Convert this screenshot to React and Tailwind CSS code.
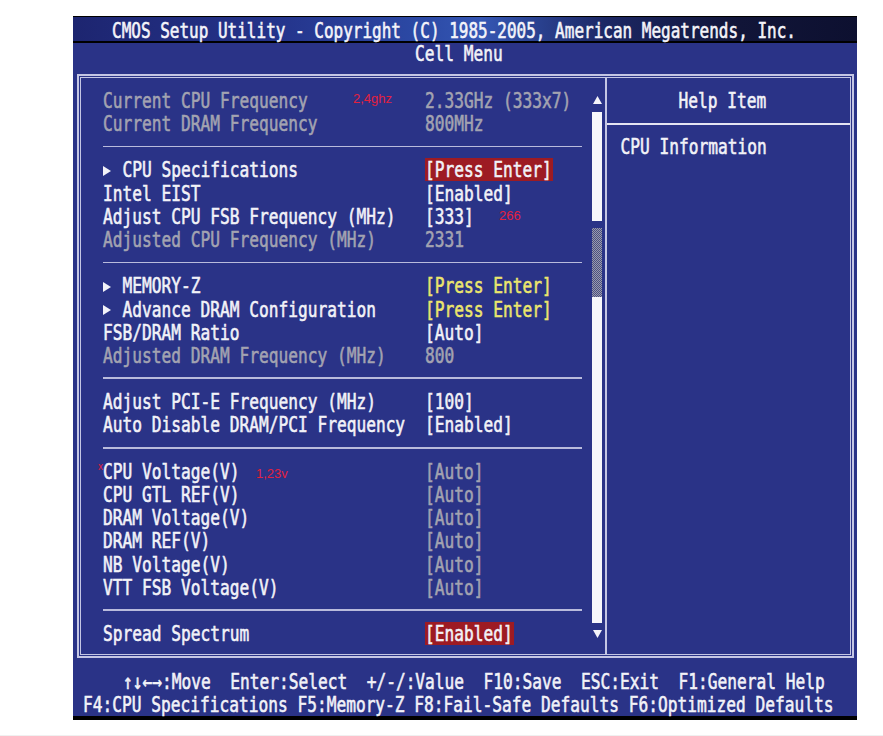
import React from 'react';

const G = 'text-[#a3a3b1]';
const W = 'text-[#f2f2f8]';
const Y = 'text-[#ece66c]';

function T({ children, className = '' }) {
  return (
    <span className={'inline-block scale-y-[1.3] translate-y-[2px] whitespace-pre [-webkit-text-stroke:0.45px_currentColor] ' + className}>
      {children}
    </span>
  );
}

function Arrow() {
  return (
    <span className="inline-flex items-center w-[19.5px] h-[23.2px] pt-[3px]">
      <svg width="8" height="10" viewBox="0 0 8 10" className="block">
        <polygon points="0,0 8,5 0,10" fill="#f2f2f8" />
      </svg>
    </span>
  );
}

const rows = [
  { l: 'Current CPU Frequency', v: '2.33GHz (333x7)', lc: G, vc: G, note: { t: '2,4ghz', c: 'left-[250px] top-[4px]' } },
  { l: 'Current DRAM Frequency', v: '800MHz', lc: G, vc: G },
  { d: true },
  { l: 'CPU Specifications', a: true, v: '[Press Enter]', lc: W, vc: W, hl: true },
  { l: 'Intel EIST', v: '[Enabled]', lc: W, vc: W },
  { l: 'Adjust CPU FSB Frequency (MHz)', v: '[333]', lc: W, vc: W, note: { t: '266', c: 'left-[396px] top-[5px]' } },
  { l: 'Adjusted CPU Frequency (MHz)', v: '2331', lc: G, vc: G },
  { d: true },
  { l: 'MEMORY-Z', a: true, v: '[Press Enter]', lc: W, vc: Y },
  { l: 'Advance DRAM Configuration', a: true, v: '[Press Enter]', lc: W, vc: Y },
  { l: 'FSB/DRAM Ratio', v: '[Auto]', lc: W, vc: W },
  { l: 'Adjusted DRAM Frequency (MHz)', v: '800', lc: G, vc: G },
  { d: true },
  { l: 'Adjust PCI-E Frequency (MHz)', v: '[100]', lc: W, vc: W },
  { l: 'Auto Disable DRAM/PCI Frequency', v: '[Enabled]', lc: W, vc: W },
  { d: true },
  { l: 'CPU Voltage(V)', v: '[Auto]', lc: W, vc: G, note: { t: '1,23v', c: 'left-[153px] top-[8px]' }, x: true },
  { l: 'CPU GTL REF(V)', v: '[Auto]', lc: W, vc: G },
  { l: 'DRAM Voltage(V)', v: '[Auto]', lc: W, vc: G },
  { l: 'DRAM REF(V)', v: '[Auto]', lc: W, vc: G },
  { l: 'NB Voltage(V)', v: '[Auto]', lc: W, vc: G },
  { l: 'VTT FSB Voltage(V)', v: '[Auto]', lc: W, vc: G },
  { d: true },
  { l: 'Spread Spectrum', v: '[Enabled]', lc: W, vc: W, hl: true },
];

function Row({ r }) {
  if (r.d) {
    return (
      <div className="h-[23.2px] flex items-center">
        <div className="h-[1.5px] w-full bg-[#b9bbdc]" />
      </div>
    );
  }
  return (
    <div className="relative h-[23.2px] flex items-center">
      <div className={'w-[322px] flex items-center ' + r.lc}>
        {r.a && <Arrow />}
        <T>{r.l}</T>
      </div>
      <div className="h-full flex items-center">
        {r.hl ? (
          <span className="h-full flex items-center bg-[#9d1b23] pr-[1px]">
            <T className={r.vc}>{r.v}</T>
          </span>
        ) : (
          <T className={r.vc}>{r.v}</T>
        )}
      </div>
      {r.note && (
        <span
          className={
            'absolute leading-[13px] text-[13px] text-[#e4203e] font-["Liberation_Sans",Arial,sans-serif] ' + r.note.c
          }
        >
          {r.note.t}
        </span>
      )}
      {r.x && (
        <span className='absolute -left-[5px] top-[3px] leading-[10px] text-[10px] text-[#e4203e] font-["Liberation_Sans",Arial,sans-serif]'>
          x
        </span>
      )}
    </div>
  );
}

function ScrollBar() {
  return (
    <div className="w-[10px] ml-[10px] flex flex-col items-center pt-[18px]">
      <svg width="9" height="9" viewBox="0 0 9 9" className="block">
        <polygon points="4.5,0 9,8 0,8" fill="#f4f4fa" />
      </svg>
      <div className="mt-[7px] w-[10px] h-[109px] bg-[#f7f7fb]" />
      <div className="mt-[7px] w-[10px] h-[69px] bg-[repeating-conic-gradient(#9c9caa_0_25%,#4a4f84_0_50%)] bg-[length:2px_2px]" />
      <div className="w-[10px] h-[326px] bg-[#f7f7fb]" />
      <svg width="9" height="8" viewBox="0 0 9 8" className="block mt-[7px]">
        <polygon points="0,0 9,0 4.5,8" fill="#f4f4fa" />
      </svg>
    </div>
  );
}

export default function App() {
  return (
    <div className="w-[883px] h-[736px] bg-white flex flex-col">
      <div className="ml-[73px] mt-[16px] w-[784px] h-[704px] bg-[#2a3387] flex flex-col text-[#f2f2f8] font-['DejaVu_Sans_Mono',monospace] text-[16.2px]">
        {/* Title bar */}
        <div className="h-[27px] shrink-0 border-t-[1.5px] border-b-[2px] border-black bg-[linear-gradient(90deg,#1d2570_0%,#24338a_25%,#2c4aa6_45%,#3557b4_52%,#1c2764_68%,#111538_85%,#0d1030_100%)] flex items-center pl-[39px]">
          <T className="text-[16px] text-[#f4f4fa]">CMOS Setup Utility - Copyright (C) 1985-2005, American Megatrends, Inc.</T>
        </div>
        {/* Cell Menu */}
        <div className="h-[31px] shrink-0">
          <div className="h-[21px] flex items-center pl-[342px]">
            <T>Cell Menu</T>
          </div>
        </div>
        {/* Frame */}
        <div className="ml-[4px] mr-[3px] h-[584px] shrink-0 border-2 border-[#c4c6e4] p-[1px]">
          <div className="h-full border border-[#c4c6e4] flex">
            {/* Left panel */}
            <div className="w-[524px] flex">
              <div className="w-[501px] pl-[22px] pt-[10.4px] flex flex-col">
                {rows.map((r, i) => (
                  <Row key={i} r={r} />
                ))}
              </div>
              <ScrollBar />
            </div>
            <div className="w-[1.5px] bg-[#c4c6e4]" />
            {/* Right panel */}
            <div className="flex-1 flex flex-col">
              <div className="h-[45px] flex items-center pl-[72px]">
                <T>Help Item</T>
              </div>
              <div className="h-[1.5px] bg-[#e4e4f2]" />
              <div className="pt-[10px] pl-[14px] h-[23.2px] flex items-center box-content">
                <T>CPU Information</T>
              </div>
            </div>
          </div>
        </div>
        {/* Footer */}
        <div className="flex-1 pt-[11.4px] flex flex-col">
          <div className="h-[23.2px] flex items-center pl-[50px]">
            <T>{'↑↓←→:Move  Enter:Select  +/-/:Value  F10:Save  ESC:Exit  F1:General Help'}</T>
          </div>
          <div className="h-[23.2px] flex items-center pl-[10px]">
            <T>{'F4:CPU Specifications F5:Memory-Z F8:Fail-Safe Defaults F6:Optimized Defaults'}</T>
          </div>
        </div>
        <div className="h-[4px] shrink-0 bg-black" />
      </div>
      <div className="mt-auto h-px bg-[#f0f0f0]" />
    </div>
  );
}
